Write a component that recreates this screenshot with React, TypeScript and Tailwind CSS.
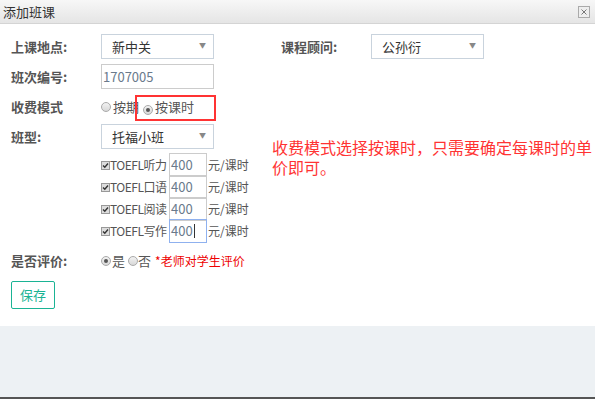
const font = { fontFamily: '"Noto Sans CJK SC", "Liberation Sans", sans-serif' };

function Select({ value }: { value: string }) {
  return (
    <div className="relative flex h-[25px] w-[113px] items-center border border-[#c9d3dd] bg-white pl-[10px] text-[13px] text-[#333]">
      {value}
      <span className="absolute right-[7px] top-[5px] text-[7px] text-[#888]">▼</span>
    </div>
  );
}

function Radio({ checked }: { checked?: boolean }) {
  return (
    <span className="inline-flex h-[10px] w-[10px] items-center justify-center rounded-full border border-[#aaa] bg-gradient-to-b from-[#f2f2f2] to-[#d8d8d8]">
      {checked && <span className="h-[4px] w-[4px] rounded-full bg-[#555]" />}
    </span>
  );
}

function Check() {
  return (
    <svg width="9" height="9" viewBox="0 0 9 9" className="shrink-0">
      <rect x="0.5" y="0.5" width="8" height="8" fill="#ddd" stroke="#999" />
      <path d="M2 4.5 L3.8 6.3 L7 2.5" stroke="#333" strokeWidth="1.4" fill="none" />
    </svg>
  );
}

const subjects = ["TOEFL听力", "TOEFL口语", "TOEFL阅读", "TOEFL写作"];

export default function App() {
  return (
    <div className="relative h-[399px] w-[595px] overflow-hidden bg-white" style={font}>
      <div className="flex h-[24px] items-center justify-between border-b border-[#d4d4d4] bg-gradient-to-b from-[#f7f7f7] to-[#e5e5e5] pl-[3px] pr-[5px]">
        <span className="text-[13px] text-[#333]">添加班课</span>
        <svg width="12" height="12" viewBox="0 0 12 12">
          <rect x="0.5" y="0.5" width="11" height="11" fill="#eee" stroke="#aaa" />
          <path d="M3.5 3.5 L8.5 8.5 M8.5 3.5 L3.5 8.5" stroke="#777" strokeWidth="1" />
        </svg>
      </div>

      <div className="h-[302px] pl-[11px] pt-[10px] text-[13px] text-[#555]">
        <div className="flex h-[25px] items-center">
          <span className="w-[90px] font-bold">上课地点:</span>
          <Select value="新中关" />
          <span className="ml-[67px] w-[90px] font-bold">课程顾问:</span>
          <Select value="公孙衍" />
        </div>

        <div className="mt-[5px] flex h-[25px] items-center">
          <span className="w-[90px] font-bold">班次编号:</span>
          <div className="flex h-[25px] w-[113px] items-center border border-[#ccc] pl-[1px] text-[13px] text-[#6a7a8c]">1707005</div>
        </div>

        <div className="mt-[5px] flex h-[25px] items-center">
          <span className="w-[90px] font-bold">收费模式</span>
          <Radio />
          <span className="ml-[2px]">按期</span>
          <span className="ml-[4px]"><Radio checked /></span>
          <span className="ml-[2px]">按课时</span>
        </div>

        <div className="mt-[5px] flex h-[25px] items-center">
          <span className="w-[90px] font-bold">班型:</span>
          <Select value="托福小班" />
        </div>

        <div className="mt-[5px] flex flex-col pl-[90px]">
          {subjects.map((s, i) => (
            <div key={s} className="flex h-[22px] items-center">
              <Check />
              <span className="w-[59px] whitespace-nowrap text-[12px] tracking-[-0.5px] text-[#555]">{s}</span>
              <div
                className={
                  i === 3
                    ? "flex h-[24px] w-[38px] items-center border border-[#8fb1ef] pl-[1px] text-[13px] text-[#6a7a8c]"
                    : "flex h-[24px] w-[38px] items-center border border-[#ccc] pl-[1px] text-[13px] text-[#6a7a8c]"
                }
              >
                400{i === 3 && <span className="ml-[1px] h-[14px] w-px bg-[#333]" />}
              </div>
              <span className="ml-[1px] text-[12px]">元/课时</span>
            </div>
          ))}
        </div>

        <div className="mt-[8px] flex h-[22px] items-center">
          <span className="w-[90px] font-bold">是否评价:</span>
          <Radio checked />
          <span className="ml-[1px]">是</span>
          <span className="ml-[3px]"><Radio /></span>
          <span>否</span>
          <span className="ml-[4px] text-[12px] text-[#e00]">*老师对学生评价</span>
        </div>

        <button className="mt-[9px] h-[28px] w-[44px] rounded-[2px] border border-[#1ab394] bg-white text-[13px] text-[#1ab394]">
          保存
        </button>
      </div>

      <div className="h-[71px] bg-[#edf1f4]" />
      <div className="h-[2px] bg-[#555]" />

      <div className="pointer-events-none absolute left-[135px] top-[95px] h-[26px] w-[81px] border-2 border-[#f33]" />
      <div className="absolute left-[272px] top-[137px] w-[330px] text-[16px] leading-[20px] text-[#f33]">
        收费模式选择按课时，只需要确定每课时的单价即可。
      </div>
    </div>
  );
}
